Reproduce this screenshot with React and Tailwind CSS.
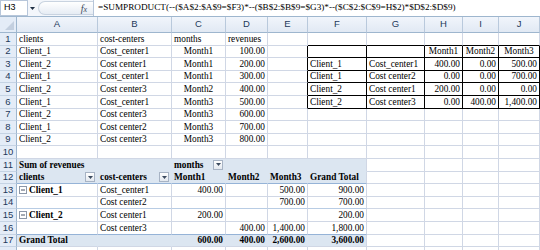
import React from 'react';

const COLS = ['A', 'B', 'C', 'D', 'E', 'F', 'G', 'H', 'I', 'J'];

const L = (t, extra = {}) => ({ t, a: 'l', ...extra });
const R = (t, extra = {}) => ({ t, a: 'r', ...extra });
const Cn = (t, extra = {}) => ({ t, a: 'c', ...extra });

const data = {
  1: [L('clients'), L('cost-centers'), L('months'), L('revenues')],
  2: [L('Client_1'), L('Cost_center1'), Cn('Month1'), R('100.00'), null, null, null, Cn('Month1'), Cn('Month2'), Cn('Month3')],
  3: [L('Client_2'), L('Cost center1'), Cn('Month1'), R('200.00'), null, L('Client_1'), L('Cost_center1'), R('400.00'), R('0.00'), R('500.00')],
  4: [L('Client_1'), L('Cost_center1'), Cn('Month1'), R('300.00'), null, L('Client_1'), L('Cost center2'), R('0.00'), R('0.00'), R('700.00')],
  5: [L('Client_2'), L('Cost center3'), Cn('Month2'), R('400.00'), null, L('Client_2'), L('Cost center1'), R('200.00'), R('0.00'), R('0.00')],
  6: [L('Client_1'), L('Cost_center1'), Cn('Month3'), R('500.00'), null, L('Client_2'), L('Cost center3'), R('0.00'), R('400.00'), R('1,400.00')],
  7: [L('Client_2'), L('Cost center3'), Cn('Month3'), R('600.00')],
  8: [L('Client_1'), L('Cost center2'), Cn('Month3'), R('700.00')],
  9: [L('Client_2'), L('Cost center3'), Cn('Month3'), R('800.00')],
  11: [L('Sum of revenues', { b: true }), null, L('months', { b: true, dd: true })],
  12: [
    L('clients', { b: true, dd: true }),
    L('cost-centers', { b: true, dd: true }),
    L('Month1', { b: true }),
    L('Month2', { b: true }),
    L('Month3', { b: true }),
    L('Grand Total', { b: true }),
  ],
  13: [L('Client_1', { b: true, minus: true }), L('Cost_center1'), R('400.00'), null, R('500.00'), R('900.00')],
  14: [null, L('Cost center2'), null, null, R('700.00'), R('700.00')],
  15: [L('Client_2', { b: true, minus: true }), L('Cost center1'), R('200.00'), null, null, R('200.00')],
  16: [null, L('Cost center3'), null, R('400.00'), R('1,400.00'), R('1,800.00')],
  17: [
    L('Grand Total', { b: true }),
    null,
    R('600.00', { b: true }),
    R('400.00', { b: true }),
    R('2,600.00', { b: true }),
    R('3,600.00', { b: true }),
  ],
};

function DropBtn() {
  return (
    <span className="mb-[1px] flex h-[10px] w-[10px] shrink-0 items-center justify-center border border-[#a7b3c4] bg-gradient-to-b from-white to-[#e3e8ef]">
      <svg width="5" height="3" viewBox="0 0 5 3">
        <path d="M0 0 L5 0 L2.5 3 Z" fill="#3b4a5e" />
      </svg>
    </span>
  );
}

function MinusBox() {
  return (
    <svg width="8" height="8" viewBox="0 0 8 8" className="mb-[2px] mr-[2px] shrink-0">
      <rect x="0.5" y="0.5" width="7" height="7" fill="white" stroke="#8c97a8" />
      <line x1="2" y1="4" x2="6" y2="4" stroke="#4a5566" />
    </svg>
  );
}

function Cell({ r, c }) {
  const row = data[r] || [];
  const cell = row[c];
  const inPivotHead = (r === 11 || r === 12) && c <= 5;
  const inPivotTotal = r === 17 && c <= 5;
  const fill = inPivotHead || inPivotTotal;
  const boxCell = r >= 2 && r <= 6 && c >= 5;
  const aboveBox = r === 1 && c >= 5;
  const leftOfBox = c === 4 && r >= 2 && r <= 6;

  let rCls = 'border-r-[#d0d7e5]';
  if (boxCell || leftOfBox) rCls = 'border-r-black';
  else if (fill && c < 5) rCls = 'border-r-[#dce6f1]';

  let bCls = 'border-b-[#d0d7e5]';
  if (boxCell || aboveBox) bCls = 'border-b-black';
  else if (r === 11 && c <= 5) bCls = 'border-b-[#dce6f1]';
  else if ((r === 12 || r === 16) && c <= 5) bCls = 'border-b-[#95b3d7]';
  else if (r === 14 && c <= 5) bCls = 'border-b-[#b8cce4]';

  const bg = fill ? 'bg-[#dce6f1]' : 'bg-white';
  let just = 'justify-start';
  if (cell && cell.a === 'r') just = 'justify-end';
  if (cell && cell.a === 'c') just = 'justify-center';
  const weight = cell && cell.b ? 'font-bold' : 'font-normal';

  return (
    <div
      className={`flex items-end overflow-visible whitespace-nowrap border-r border-b px-[2px] [font-family:'Liberation_Serif',serif] text-[9.3px] leading-[11px] text-black ${rCls} ${bCls} ${bg} ${just} ${weight}`}
    >
      {cell && cell.minus ? <MinusBox /> : null}
      {cell ? <span className={cell.dd ? 'flex-1' : ''}>{cell.t}</span> : null}
      {cell && cell.dd ? <DropBtn /> : null}
    </div>
  );
}

export default function App() {
  const rows = Array.from({ length: 18 }, (_, i) => i + 1);
  return (
    <div className="h-[250px] w-[540px] overflow-hidden bg-white">
      {/* Formula bar */}
      <div className="flex h-[17px] items-stretch border-b border-[#9eb6ce] bg-[#f3f6fb]">
        <div className="flex w-[28px] items-center border border-[#b7c6da] bg-white pl-[3px] [font-family:'Liberation_Sans',sans-serif] text-[9px] text-black">
          H3
        </div>
        <div className="flex w-[9px] items-center justify-center">
          <svg width="5" height="3" viewBox="0 0 5 3">
            <path d="M0 0 L5 0 L2.5 3 Z" fill="#1f2f45" />
          </svg>
        </div>
        <div className="flex w-[56px] items-center py-[1px] pl-[1px]">
          <div className="flex h-full flex-1 items-center justify-end rounded-l-full border border-r-0 border-[#c9d3e0] bg-gradient-to-b from-white to-[#e6ecf4] pr-[6px]">
            <span className="[font-family:'Liberation_Serif',serif] text-[10px] italic text-[#3a4a5e]">
              f<span className="text-[8px]">x</span>
            </span>
          </div>
        </div>
        <div className="flex flex-1 items-center whitespace-nowrap border-l border-[#b7c6da] bg-white pl-[4px] [font-family:'Liberation_Serif',serif] text-[9.2px] text-black">
          =SUMPRODUCT(--($A$2:$A$9=$F3)*--($B$2:$B$9=$G3)*--($C$2:$C$9=H$2)*$D$2:$D$9)
        </div>
      </div>

      {/* Grid */}
      <div className="grid grid-cols-[17px_81px_74px_54px_42px_40px_59px_58px_38px_36px_1fr] grid-rows-[16px_repeat(18,12.6px)]">
        <div className="flex items-end justify-end border-r border-b border-[#9eb6ce] bg-[#e4ecf7] p-[2px]">
          <svg width="9" height="9" viewBox="0 0 9 9">
            <path d="M9 0 L9 9 L0 9 Z" fill="#c3cfdf" />
          </svg>
        </div>
        {COLS.map((c) => (
          <div
            key={c}
            className="flex items-center justify-center border-r border-b border-r-[#b9c9dc] border-b-[#9eb6ce] bg-gradient-to-b from-[#f1f5fb] to-[#e1e9f4] [font-family:'Liberation_Sans',sans-serif] text-[9.5px] text-[#1e395b]"
          >
            {c}
          </div>
        ))}
        {rows.map((r) => (
          <React.Fragment key={r}>
            <div className="flex items-center justify-center border-r border-b border-r-[#9eb6ce] border-b-[#c5d3e4] bg-[#e4ecf7] [font-family:'Liberation_Sans',sans-serif] text-[9.5px] text-[#1e395b]">
              {r < 18 ? r : ''}
            </div>
            {COLS.map((c, ci) => (
              <Cell key={c} r={r} c={ci} />
            ))}
          </React.Fragment>
        ))}
      </div>
    </div>
  );
}
